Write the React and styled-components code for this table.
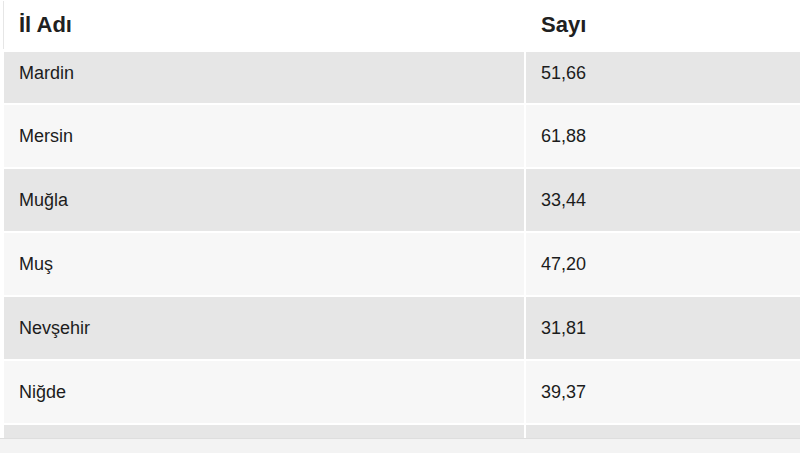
import React from 'react';
import styled, { createGlobalStyle } from 'styled-components';

const ROWS = [
  { name: 'Mardin', value: '51,66', clipped: true },
  { name: 'Mersin', value: '61,88' },
  { name: 'Muğla', value: '33,44' },
  { name: 'Muş', value: '47,20' },
  { name: 'Nevşehir', value: '31,81' },
  { name: 'Niğde', value: '39,37' },
  // next row is scrolled below the fold, only its top edge shows
  { name: '', value: '' },
];

const GlobalStyle = createGlobalStyle`
  html, body {
    margin: 0;
    padding: 0;
    background: #ffffff;
    font-family: "Liberation Sans", Arial, sans-serif;
  }
`;

const Page = styled.div`
  width: 800px;
  height: 453px;
  overflow: hidden;
  display: flex;
  flex-direction: column;
`;

const Frame = styled.div`
  height: 438px;
  overflow: hidden;
  padding-left: 2px;
`;

const Table = styled.table`
  border-collapse: separate;
  border-spacing: 2px;
  margin-top: -2px;
  table-layout: fixed;
  width: 1050px;
  color: #1c1c1c;
`;

const HeadCell = styled.th`
  height: 50px;
  padding: 0 15px;
  text-align: left;
  vertical-align: middle;
  font-size: 22px;
  font-weight: 700;
  color: #202020;
  background: #ffffff;

  &:first-child {
    box-shadow: -2px 0 0 -1px #e6e6e6;
  }
`;

const Row = styled.tr`
  background: ${(p) => (p.$odd ? '#e6e6e6' : '#f7f7f7')};
`;

const Cell = styled.td`
  height: ${(p) => (p.$clipped ? '51px' : '62px')};
  padding: ${(p) => (p.$clipped ? '0 15px 9px' : '0 15px')};
  box-sizing: border-box;
  font-size: 18px;
  vertical-align: middle;
`;

const Footer = styled.div`
  flex: 1;
  border-top: 1px solid #dedede;
  background: #f3f3f3;
`;

export default function App() {
  return (
    <>
      <GlobalStyle />
      <Page>
        <Frame>
          <Table>
            <colgroup>
              <col style={{ width: 520 }} />
              <col style={{ width: 524 }} />
            </colgroup>
            <thead>
              <tr>
                <HeadCell>İl Adı</HeadCell>
                <HeadCell>Sayı</HeadCell>
              </tr>
            </thead>
            <tbody>
              {ROWS.map((row, i) => (
                <Row key={i} $odd={i % 2 === 0}>
                  <Cell $clipped={row.clipped}>{row.name}</Cell>
                  <Cell $clipped={row.clipped}>{row.value}</Cell>
                </Row>
              ))}
            </tbody>
          </Table>
        </Frame>
        <Footer />
      </Page>
    </>
  );
}
